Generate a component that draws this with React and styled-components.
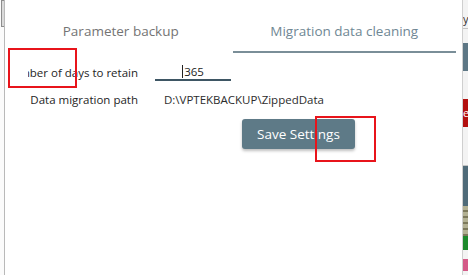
import React from 'react';
import styled, { createGlobalStyle } from 'styled-components';

const GlobalStyle = createGlobalStyle`
  html, body {
    margin: 0;
    padding: 0;
    background: #ffffff;
  }
  body {
    font-family: 'Open Sans', 'Liberation Sans', sans-serif;
    width: 468px;
    height: 275px;
    overflow: hidden;
  }
`;

const Screen = styled.div`
  position: relative;
  display: flex;
  width: 468px;
  height: 275px;
  overflow: hidden;
`;

const LeftEdge = styled.div`
  width: 4px;
  flex: none;
  border-right: 1px solid #b9b9b9;
  background: #fbfbfb;
  display: flex;
  flex-direction: column;
`;

const EdgeThumb = styled.div`
  height: 25px;
  margin-left: 1px;
  border: 1px solid #8d8d8d;
  border-right: none;
  background: #dadada;
`;

const Dialog = styled.div`
  flex: 1;
  background: #ffffff;
  border-right: 1px solid #cfcfcf;
  display: flex;
  flex-direction: column;
`;

const Tabs = styled.div`
  display: grid;
  grid-template-columns: 1fr 1fr;
  padding: 21px 6px 0 4px;
`;

const Tab = styled.div`
  text-align: center;
  font-size: 13.5px;
  line-height: 20px;
  padding-bottom: 10px;
  color: ${p => (p.$active ? '#6f8794' : '#747474')};
  border-bottom: 2px solid ${p => (p.$active ? '#7a8e98' : 'transparent')};
`;

const Form = styled.div`
  display: flex;
  flex-direction: column;
  padding-top: 10px;
  font-size: 11.5px;
`;

const Row = styled.div`
  display: flex;
  align-items: center;
  height: 18px;
  margin-bottom: ${p => p.$gap || 0}px;
`;

const Label = styled.div`
  width: 110px;
  margin-left: 23px;
  margin-right: 17px;
  overflow: hidden;
  white-space: nowrap;
  display: flex;
  justify-content: flex-end;
  color: #1e1e1e;
`;

const NumberField = styled.div`
  width: 76px;
  height: 16px;
  border-bottom: 2px solid #3e5664;
  display: flex;
  justify-content: center;
  align-items: center;
  color: #222;
`;

const Caret = styled.span`
  width: 1px;
  height: 13px;
  background: #222;
  margin-right: 1px;
`;

const PathValue = styled.div`
  padding-left: 9px;
  white-space: nowrap;
  color: #2c2c2c;
`;

const ButtonRow = styled.div`
  display: flex;
  padding-left: 237px;
  margin-top: 11px;
`;

const SaveButton = styled.button`
  width: 113px;
  height: 30px;
  border: none;
  border-radius: 3px;
  background: #5e7a87;
  color: #ffffff;
  font-family: inherit;
  font-size: 13.5px;
  box-shadow: 0 2px 3px rgba(0, 0, 0, 0.25);
  padding: 0;
`;

const BackApp = styled.div`
  width: 5px;
  flex: none;
  display: flex;
  flex-direction: column;
  background: #f3f3f3;
  overflow: hidden;
`;

const Strip = styled.div`
  height: ${p => p.$h}px;
  flex: none;
  background: ${p => p.$bg || 'transparent'};
  border-bottom: ${p => (p.$line ? '1px solid #c4c4c4' : 'none')};
  color: ${p => p.$fg || '#333'};
  font-size: 11px;
  line-height: ${p => p.$h}px;
  white-space: nowrap;
  overflow: hidden;
`;

const Dots = styled.div`
  height: 30px;
  flex: none;
  background: repeating-linear-gradient(180deg, #b3b193 0 4px, #7d7a5c 4px 6px);
`;

const Marker = styled.div`
  position: absolute;
  border: 2px solid #e8141b;
  pointer-events: none;
`;

export default function App() {
  return (
    <>
      <GlobalStyle />
      <Screen>
        <LeftEdge>
          <EdgeThumb />
        </LeftEdge>
        <Dialog>
          <Tabs>
            <Tab>Parameter backup</Tab>
            <Tab $active>Migration data cleaning</Tab>
          </Tabs>
          <Form>
            <Row $gap={9}>
              <Label>Number of days to retain</Label>
              <NumberField>
                <Caret />
                365
              </NumberField>
            </Row>
            <Row>
              <Label>Data migration path</Label>
              <PathValue>D:\VPTEKBACKUP\ZippedData</PathValue>
            </Row>
            <ButtonRow>
              <SaveButton>Save Settings</SaveButton>
            </ButtonRow>
          </Form>
        </Dialog>
        <BackApp>
          <Strip $h={10} />
          <Strip $h={18} $line>ys</Strip>
          <Strip $h={14} />
          <Strip $h={28} $bg="#5d7785" />
          <Strip $h={28} />
          <Strip $h={28} $bg="#b3100f" $fg="#fff">e</Strip>
          <Strip $h={38} $line />
          <Strip $h={40} $bg="#4f6b79" />
          <Dots />
          <Strip $h={14} $bg="#1d8a2c" />
          <Strip $h={9} />
          <Strip $h={12} $bg="#d45a88" />
        </BackApp>
        <Marker style={{ left: 8, top: 48, width: 65, height: 36 }} />
        <Marker style={{ left: 315, top: 116, width: 57, height: 42 }} />
      </Screen>
    </>
  );
}
